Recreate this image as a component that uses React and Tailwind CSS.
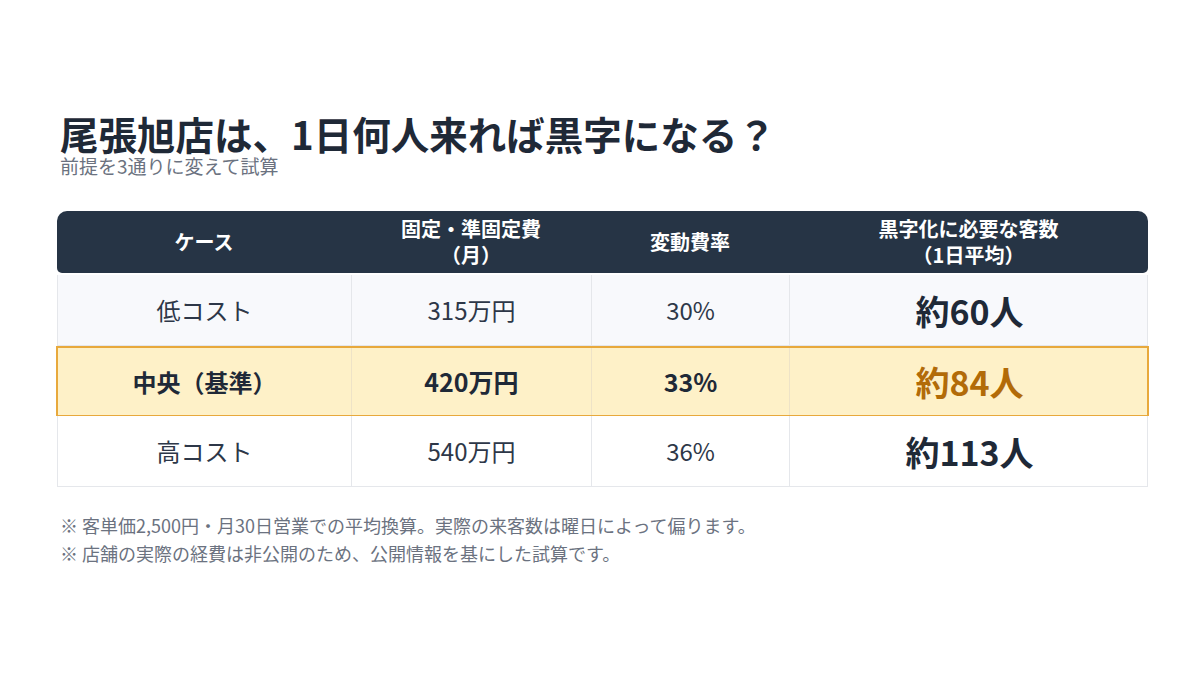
import React from 'react';

const font = { fontFamily: '"Noto Sans CJK JP", "Noto Sans", sans-serif' };

const rows = [
  { name: '低コスト', fixed: '315万円', rate: '30%', need: '約60人', bg: 'bg-[#f8f9fc]' },
  { name: '中央（基準）', fixed: '420万円', rate: '33%', need: '約84人', hl: true },
  { name: '高コスト', fixed: '540万円', rate: '36%', need: '約113人', bg: 'bg-white' },
];

const cols = 'grid grid-cols-[294px_240px_198px_359px]';

function Row({ r }) {
  if (r.hl) {
    return (
      <div className={`${cols} h-[70px] -mx-[1px] border-2 border-b border-[#e8a93c] bg-[#fef1c8] font-bold text-[#1f2937]`}>
        <div className="flex items-center justify-center border-r border-[#eee3c7] text-[24px]">{r.name}</div>
        <div className="flex items-center justify-center border-r border-[#eee3c7] text-[25px]">{r.fixed}</div>
        <div className="flex items-center justify-center border-r border-[#eee3c7] text-[25px]">{r.rate}</div>
        <div className="flex items-center justify-center text-[34px] text-[#b26b08]">{r.need}</div>
      </div>
    );
  }
  return (
    <div className={`${cols} h-[71px] border-x border-b border-[#e5e7eb] ${r.bg} text-[24px] text-[#2d3748]`}>
      <div className="flex items-center justify-center border-r border-[#e5e7eb]">{r.name}</div>
      <div className="flex items-center justify-center border-r border-[#e5e7eb]">{r.fixed}</div>
      <div className="flex items-center justify-center border-r border-[#e5e7eb]">{r.rate}</div>
      <div className="flex items-center justify-center text-[34px] font-bold text-[#1f2937]">{r.need}</div>
    </div>
  );
}

export default function App() {
  return (
    <div className="w-[1200px] h-[675px] bg-white pt-[110px] pl-[57px]" style={font}>
      <div className="pl-[3px]">
        <h1 className="mt-[3px] text-[38.5px] font-bold leading-[40px] text-[#1f2937]">尾張旭店は、1日何人来れば黒字になる？</h1>
        <p className="mt-[2px] text-[19px] leading-[22px] text-[#6b7280]">前提を3通りに変えて試算</p>
      </div>

      <div className="mt-[34px] w-[1091px]">
        <div className={`${cols} h-[62px] rounded-t-[10px] rounded-b-[5px] bg-[#263445] text-white font-bold text-[20px] leading-[26px] text-center`}>
          <div className="flex items-center justify-center">ケース</div>
          <div className="flex flex-col items-center justify-center">
            <span>固定・準固定費</span>
            <span>（月）</span>
          </div>
          <div className="flex items-center justify-center">変動費率</div>
          <div className="flex flex-col items-center justify-center">
            <span>黒字化に必要な客数</span>
            <span>（1日平均）</span>
          </div>
        </div>
        <div className="mt-[2px]">
          {rows.map((r) => (
            <Row key={r.name} r={r} />
          ))}
        </div>
      </div>

      <div className="mt-[24px] pl-[3px] text-[18px] leading-[28px] text-[#6b7280]">
        <p>※ 客単価2,500円・月30日営業での平均換算。実際の来客数は曜日によって偏ります。</p>
        <p>※ 店舗の実際の経費は非公開のため、公開情報を基にした試算です。</p>
      </div>
    </div>
  );
}
